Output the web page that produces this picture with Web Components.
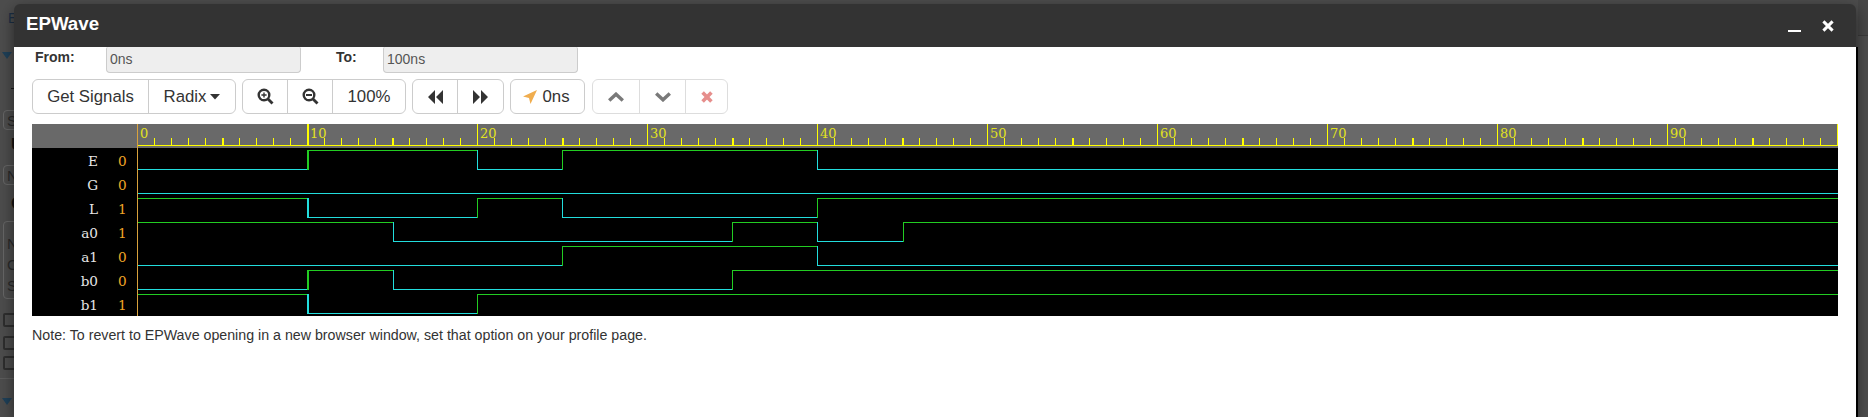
<!DOCTYPE html>
<html>
<head>
<meta charset="utf-8">
<title>EPWave</title>
<style>
html, body {
	margin: 0;
	height: 100%;
	overflow: hidden;
	background-color: #4d4d4d;
	font-family: "Liberation Sans", Arial, sans-serif;
}
</style>
</head>
<body>
<page-behind></page-behind>
<wave-modal heading="EPWave">
	<range-row></range-row>
	<wave-toolbar></wave-toolbar>
	<wave-view>
		<wave-ruler></wave-ruler>
		<wave-signal name="E" value="0" start="0" edges="10 20 25 40"></wave-signal>
		<wave-signal name="G" value="0" start="0" edges=""></wave-signal>
		<wave-signal name="L" value="1" start="1" edges="10 20 25 40"></wave-signal>
		<wave-signal name="a0" value="1" start="1" edges="15 35 40 45"></wave-signal>
		<wave-signal name="a1" value="0" start="0" edges="25 40"></wave-signal>
		<wave-signal name="b0" value="0" start="0" edges="10 15 35"></wave-signal>
		<wave-signal name="b1" value="1" start="1" edges="10 20"></wave-signal>
	</wave-view>
	<p>Note: To revert to EPWave opening in a new browser window, set that option on your profile page.</p>
</wave-modal>

<script>
const SCALE = 17;

// canvas rounding in the original puts edges a bit unevenly
function snap(t) {
	var x = Math.round(SCALE * t - 0.5 + (t % 10 === 5 ? 0.5 : 0));
	return (t === 15 || t === 45) ? x + 1 : x;
}

class PageBehind extends HTMLElement {
	constructor() {
		super();
		var shadowRoot = this.attachShadow({mode: 'open'});
		shadowRoot.innerHTML = `
	<style>
	:host {
		display: flex;
		justify-content: space-between;
		height: 417px;
		overflow: hidden;
		font: 14px "Liberation Sans", Arial, sans-serif;
		color: #1c1c1c;
	}

	.left {
		width: 60px;
		display: flex;
		flex-direction: column;
	}

	.title {
		margin: 13px 0 0 8px;
		height: 39px;
		font-size: 14px;
		line-height: 11px;
		color: #1c2f45;
	}

	.tri {
		width: 0;
		margin-left: 2px;
		border: solid transparent;
		border-width: 7px 5.5px 0;
		border-top-color: #1f4058;
	}

	.dash {
		width: 6px;
		height: 1px;
		margin: 29px 0 0 11px;
		background-color: #1a1a1a;
	}

	.box {
		width: 40px;
		margin-left: 3px;
		padding-left: 3px;
		box-sizing: border-box;
		border: 1px solid #666;
		border-radius: 4px;
		color: #2a2a2a;
		line-height: 19px;
		font-size: 15px;
	}

	.big {
		font-weight: bold;
		font-size: 17px;
		color: #141414;
		margin-left: 11px;
		line-height: 16px;
	}

	.check {
		width: 30px;
		height: 14px;
		margin-left: 3px;
		box-sizing: border-box;
		border: 2px solid #2e2e2e;
		border-radius: 2px;
	}

	.rule {
		height: 1px;
		background-color: #5c5c5c;
	}

	.right {
		width: 10px;
		display: flex;
		flex-direction: column;
	}

	.band {
		height: 35px;
		background-color: #474747;
		border-bottom: 1px solid #3b3b3b;
	}
	</style>
	<div class="left">
		<div class="title">E</div>
		<div class="tri"></div>
		<div class="dash"></div>
		<div class="box" style="margin-top:21px;height:20px">S</div>
		<div class="big" style="margin-top:7px">U</div>
		<div class="box" style="margin-top:12px;height:20px">N</div>
		<div class="big" style="margin-top:11px">C</div>
		<div class="box" style="margin-top:9px;height:78px;line-height:21px;padding-top:11px">N<br>C<br>S</div>
		<div class="check" style="margin-top:14px"></div>
		<div class="check" style="margin-top:9px"></div>
		<div class="check" style="margin-top:6px"></div>
		<div class="rule" style="margin-top:8px"></div>
		<div class="tri" style="margin-top:19px"></div>
	</div>
	<div class="right"><div class="band"></div></div>
	`;
	}
}

class WaveModal extends HTMLElement {
	constructor() {
		super();
		var shadowRoot = this.attachShadow({mode: 'open'});
		shadowRoot.innerHTML = `
	<style>
	:host {
		display: block;
		position: absolute;
		left: 14px;
		top: 4px;
		width: 1842px;
		height: 413px;
		border-radius: 6px 6px 0 0;
		box-shadow: 0 5px 15px rgba(0,0,0,.5);
		color: #333;
	}

	header {
		display: flex;
		height: 43px;
		padding: 0 22px 0 12px;
		background-color: #333;
		border-radius: 6px 6px 0 0;
		color: #fff;
	}

	h3 {
		margin: 0;
		font-size: 18.7px;
		line-height: 35px;
		padding: 2px 0 0 0;
	}

	.controls {
		display: flex;
		gap: 21px;
		margin-left: auto;
		padding-top: 16px;
	}

	main {
		height: 370px;
		padding: 0 18px;
		background-color: #fff;
		box-shadow: 2px 0 0 #000;
		font-size: 14px;
	}

	::slotted(p) {
		margin: 9px 0 0;
		font-size: 14.23px;
		line-height: 20px;
		color: #333;
	}
	</style>
	<header>
		<h3></h3>
		<div class="controls">
			<svg width="13" height="12" viewBox="0 0 13 12"><rect y="10" width="13" height="2.4" fill="#fff"/></svg>
			<svg width="12" height="12" viewBox="0 0 12 12"><path d="M1.4 1.4L10.6 10.6M10.6 1.4L1.4 10.6" stroke="#fff" stroke-width="3"/></svg>
		</div>
	</header>
	<main><slot></slot></main>
	`;
		shadowRoot.querySelector('h3').textContent = this.getAttribute('heading');
	}
}

class RangeRow extends HTMLElement {
	constructor() {
		super();
		var shadowRoot = this.attachShadow({mode: 'open'});
		shadowRoot.innerHTML = `
	<style>
	:host {
		display: flex;
		height: 26px;
		margin-bottom: 6px;
		font-size: 14px;
		line-height: 20px;
	}

	b {
		color: #333;
	}

	.from {
		width: 71px;
		padding-left: 3px;
	}

	.to {
		width: 47px;
		margin-left: 35px;
	}

	.field {
		width: 195px;
		box-sizing: border-box;
		padding: 2px 3px;
		background-color: #eee;
		border: 1px solid #ccc;
		border-top: 0;
		border-radius: 2px 2px 4px 4px;
		color: #555;
	}
	</style>
	<b class="from">From:</b>
	<div class="field">0ns</div>
	<b class="to">To:</b>
	<div class="field">100ns</div>
	`;
	}
}

class ToolGroup extends HTMLElement {
	constructor() {
		super();
		var shadowRoot = this.attachShadow({mode: 'open'});
		shadowRoot.innerHTML = `
	<style>
	:host {
		display: flex;
		height: 35px;
		box-sizing: border-box;
		border: 1px solid #ccc;
		border-radius: 6px;
		background-color: #fff;
	}

	:host([disabled]) {
		margin-left: 1px;
		opacity: .65;
	}

	::slotted(*) {
		border-left: 1px solid #ccc;
	}

	::slotted(:first-child) {
		border-left: 0;
	}
	</style>
	<slot></slot>
	`;
	}
}

class ToolButton extends HTMLElement {
	constructor() {
		super();
		var shadowRoot = this.attachShadow({mode: 'open'});
		shadowRoot.innerHTML = `
	<style>
	:host {
		display: flex;
		align-items: center;
		justify-content: center;
		gap: 4px;
		box-sizing: border-box;
		font-size: 16.8px;
		color: #333;
	}
	</style>
	<slot></slot>
	`;
	}
}

class WaveToolbar extends HTMLElement {
	constructor() {
		super();
		var shadowRoot = this.attachShadow({mode: 'open'});
		shadowRoot.innerHTML = `
	<style>
	:host {
		display: flex;
		gap: 6px;
		margin-bottom: 10px;
	}

	.chev {
		fill: none;
		stroke: #333;
		stroke-width: 3.4;
	}
	</style>
	<tool-group>
		<tool-button style="width:115px">Get Signals</tool-button>
		<tool-button style="width:87px">Radix
			<svg width="10" height="6" viewBox="0 0 10 6"><path d="M0 0H10L5 5.5Z" fill="#333"/></svg>
		</tool-button>
	</tool-group>
	<tool-group>
		<tool-button style="width:44px">
			<svg width="17" height="17" viewBox="0 0 17 17"><circle cx="7" cy="7" r="5.3" fill="none" stroke="#333" stroke-width="2.4"/><path d="M11 11L15.5 15.5" stroke="#333" stroke-width="2.8"/><path d="M4.4 7H9.6M7 4.4V9.6" stroke="#333" stroke-width="1.4"/></svg>
		</tool-button>
		<tool-button style="width:45px">
			<svg width="17" height="17" viewBox="0 0 17 17"><circle cx="7" cy="7" r="5.3" fill="none" stroke="#333" stroke-width="2.4"/><path d="M11 11L15.5 15.5" stroke="#333" stroke-width="2.8"/><path d="M4 7H10" stroke="#333" stroke-width="2"/></svg>
		</tool-button>
		<tool-button style="width:73px">100%</tool-button>
	</tool-group>
	<tool-group>
		<tool-button style="width:44px">
			<svg width="15" height="14" viewBox="0 0 15 14"><path d="M7 0V14L0 7ZM15 0V14L8 7Z" fill="#333"/></svg>
		</tool-button>
		<tool-button style="width:46px">
			<svg width="15" height="14" viewBox="0 0 15 14"><path d="M0 0V14L7 7ZM8 0V14L15 7Z" fill="#333"/></svg>
		</tool-button>
	</tool-group>
	<tool-group>
		<tool-button style="width:73px;padding-right:2px">
			<svg style="margin-right:1px" width="14" height="14" viewBox="0 0 14 14"><path d="M14 0L0 6.5L6 8L7.5 14Z" fill="#f0ad4e"/></svg>
			0ns
		</tool-button>
	</tool-group>
	<tool-group disabled>
		<tool-button style="width:46px">
			<svg class="chev" width="16" height="10" viewBox="0 0 16 10"><path d="M1.2 8.6L8 2.2L14.8 8.6"/></svg>
		</tool-button>
		<tool-button style="width:46px">
			<svg class="chev" width="16" height="10" viewBox="0 0 16 10"><path d="M1.2 1.4L8 7.8L14.8 1.4"/></svg>
		</tool-button>
		<tool-button style="width:42px">
			<svg width="12" height="12" viewBox="0 0 12 12"><path d="M1.6 1.6L10.4 10.4M10.4 1.6L1.6 10.4" stroke="#d9534f" stroke-width="3.6"/></svg>
		</tool-button>
	</tool-group>
	`;
	}
}

class WaveView extends HTMLElement {
	constructor() {
		super();
		var shadowRoot = this.attachShadow({mode: 'open'});
		shadowRoot.innerHTML = `
	<style>
	:host {
		display: flex;
		flex-direction: column;
		width: 1806px;
		background-color: #000;
	}
	</style>
	<slot></slot>
	`;
	}
}

class WaveRuler extends HTMLElement {
	constructor() {
		super();
		var shadowRoot = this.attachShadow({mode: 'open'});
		var marks = '';
		for (var t = 0; t <= 100; t++) {
			var x = Math.round(SCALE * t - 0.5);
			if (t % 10 === 0) {
				var wide = t === 10 ? 2 : 1;
				if (t > 0) {
					marks += `<rect x="${x - 1}" y="0" width="${wide}" height="22"/>`;
				}
				if (t < 100) {
					marks += `<text x="${x + 2}" y="14">${t}</text>`;
				}
			} else {
				var wide = t % 5 === 0 ? 2 : 1;
				marks += `<rect x="${x - 1}" y="14" width="${wide}" height="7"/>`;
			}
		}
		shadowRoot.innerHTML = `
	<style>
	:host {
		display: flex;
		height: 24px;
		background-color: #696969;
	}

	.head {
		width: 105px;
		border-right: 1px solid #d9a23c;
	}

	svg {
		display: block;
		fill: #ffff00;
		shape-rendering: crispEdges;
	}

	text {
		font: 13px "DejaVu Serif", serif;
		fill: #e2e21f;
		shape-rendering: auto;
	}
	</style>
	<div class="head"></div>
	<svg width="1700" height="24" viewBox="0 0 1700 24">
		<rect x="0" y="21" width="1700" height="1"/>
		${marks}
	</svg>
	`;
	}
}

class WaveSignal extends HTMLElement {
	constructor() {
		super();
		var shadowRoot = this.attachShadow({mode: 'open'});
		var level = Number(this.getAttribute('start'));
		var edges = this.getAttribute('edges').split(' ').filter(Boolean).map(Number);
		var from = 0;
		var rects = '';
		var yOf = (v) => v ? 2 : 21;
		var colorOf = (v) => v ? '#22cc22' : '#22dddd';

		edges.concat([100]).forEach((t) => {
			var x = snap(t) - 1;
			var start = from === 0 ? 0 : snap(from) - 1;
			rects += `<rect x="${start}" y="${yOf(level)}" width="${x - start + 1}" height="1" fill="${colorOf(level)}"/>`;
			if (t < 100) {
				level = level ? 0 : 1;
				rects += `<rect x="${x}" y="2" width="${t === 10 ? 2 : 1}" height="20" fill="${colorOf(level)}"/>`;
			}
			from = t;
		});

		shadowRoot.innerHTML = `
	<style>
	:host {
		display: flex;
		height: 24px;
		font: 13.6px/27px "DejaVu Serif", serif;
	}

	.head {
		display: flex;
		width: 105px;
		border-right: 1px solid #d9a23c;
	}

	.name {
		width: 66px;
		text-align: right;
		color: #e6e6e6;
	}

	.value {
		margin-left: 20px;
		color: #f0a526;
	}

	svg {
		display: block;
		shape-rendering: crispEdges;
	}
	</style>
	<div class="head">
		<span class="name">${this.getAttribute('name')}</span>
		<span class="value">${this.getAttribute('value')}</span>
	</div>
	<svg width="1700" height="24" viewBox="0 0 1700 24">${rects}</svg>
	`;
	}
}

customElements.define('page-behind', PageBehind);
customElements.define('wave-modal', WaveModal);
customElements.define('range-row', RangeRow);
customElements.define('tool-group', ToolGroup);
customElements.define('tool-button', ToolButton);
customElements.define('wave-toolbar', WaveToolbar);
customElements.define('wave-view', WaveView);
customElements.define('wave-ruler', WaveRuler);
customElements.define('wave-signal', WaveSignal);
</script>
</body>
</html>
